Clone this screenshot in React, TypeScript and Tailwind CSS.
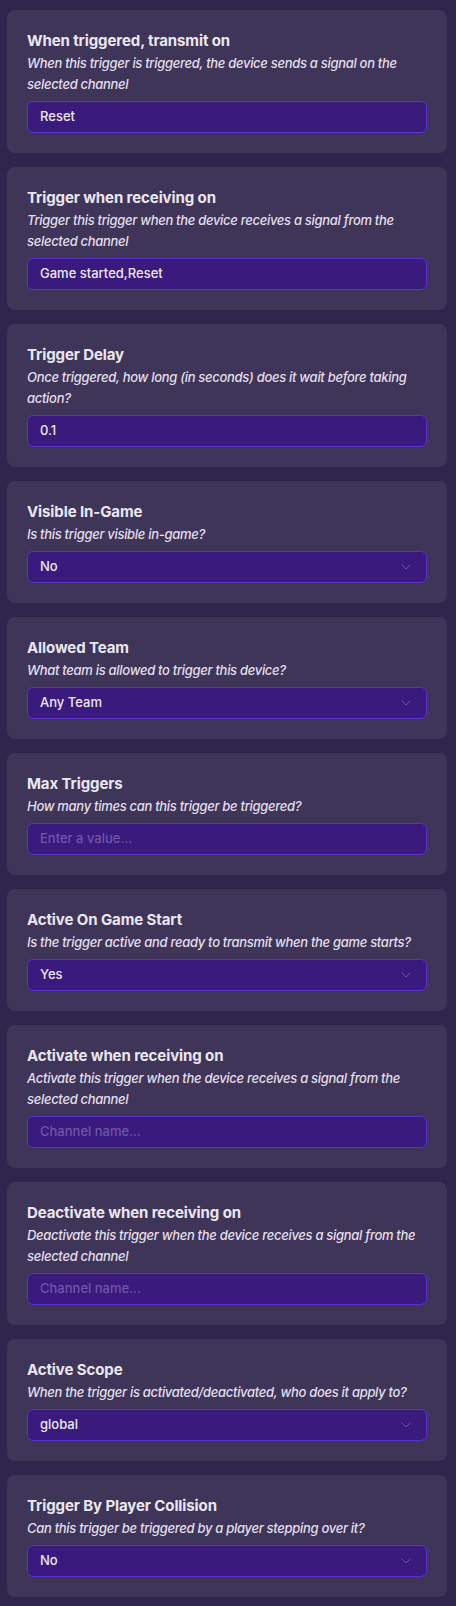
import { ChevronDown } from "lucide-react";

interface Setting {
  title: string;
  description: string;
  value?: string;
  placeholder?: string;
  select?: boolean;
}

const settings: Setting[] = [
  {
    title: "When triggered, transmit on",
    description: "When this trigger is triggered, the device sends a signal on the selected channel",
    value: "Reset",
  },
  {
    title: "Trigger when receiving on",
    description: "Trigger this trigger when the device receives a signal from the selected channel",
    value: "Game started,Reset",
  },
  {
    title: "Trigger Delay",
    description: "Once triggered, how long (in seconds) does it wait before taking action?",
    value: "0.1",
  },
  {
    title: "Visible In-Game",
    description: "Is this trigger visible in-game?",
    value: "No",
    select: true,
  },
  {
    title: "Allowed Team",
    description: "What team is allowed to trigger this device?",
    value: "Any Team",
    select: true,
  },
  {
    title: "Max Triggers",
    description: "How many times can this trigger be triggered?",
    placeholder: "Enter a value...",
  },
  {
    title: "Active On Game Start",
    description: "Is the trigger active and ready to transmit when the game starts?",
    value: "Yes",
    select: true,
  },
  {
    title: "Activate when receiving on",
    description: "Activate this trigger when the device receives a signal from the selected channel",
    placeholder: "Channel name...",
  },
  {
    title: "Deactivate when receiving on",
    description: "Deactivate this trigger when the device receives a signal from the selected channel",
    placeholder: "Channel name...",
  },
  {
    title: "Active Scope",
    description: "When the trigger is activated/deactivated, who does it apply to?",
    value: "global",
    select: true,
  },
  {
    title: "Trigger By Player Collision",
    description: "Can this trigger be triggered by a player stepping over it?",
    value: "No",
    select: true,
  },
];

function SettingCard({ setting }: { setting: Setting }) {
  return (
    <div className="bg-[#3e3558] rounded-lg p-5">
      <h3 className="text-[15px] leading-[21px] font-bold tracking-[-0.1px] text-[#ebe7f2]">
        {setting.title}
      </h3>
      <p className="mt-[2px] text-[13px] leading-[21px] font-medium italic tracking-[-0.3px] text-[#e3dfeb]">
        {setting.description}
      </p>
      <div className="mt-[6px] h-8 flex items-center justify-between rounded-md border border-[#5a32cf] bg-[#3a1a7c] pl-3 pr-3">
        {setting.value ? (
          <span className="text-[13px] font-medium text-[#ece8f4]">{setting.value}</span>
        ) : (
          <span className="text-[13px] font-medium text-[#6f55aa]">{setting.placeholder}</span>
        )}
        {setting.select && (
          <ChevronDown size={16} strokeWidth={1.25} className="text-[#7a5cb8]" />
        )}
      </div>
    </div>
  );
}

export default function App() {
  return (
    <div
      className="min-h-screen bg-[#30264d] pl-[7px] pr-[9px] pt-[10px] pb-[9px] flex flex-col gap-[14px]"
      style={{ fontFamily: "Inter, 'Noto Sans', sans-serif" }}
    >
      {settings.map((s) => (
        <SettingCard key={s.title} setting={s} />
      ))}
    </div>
  );
}
